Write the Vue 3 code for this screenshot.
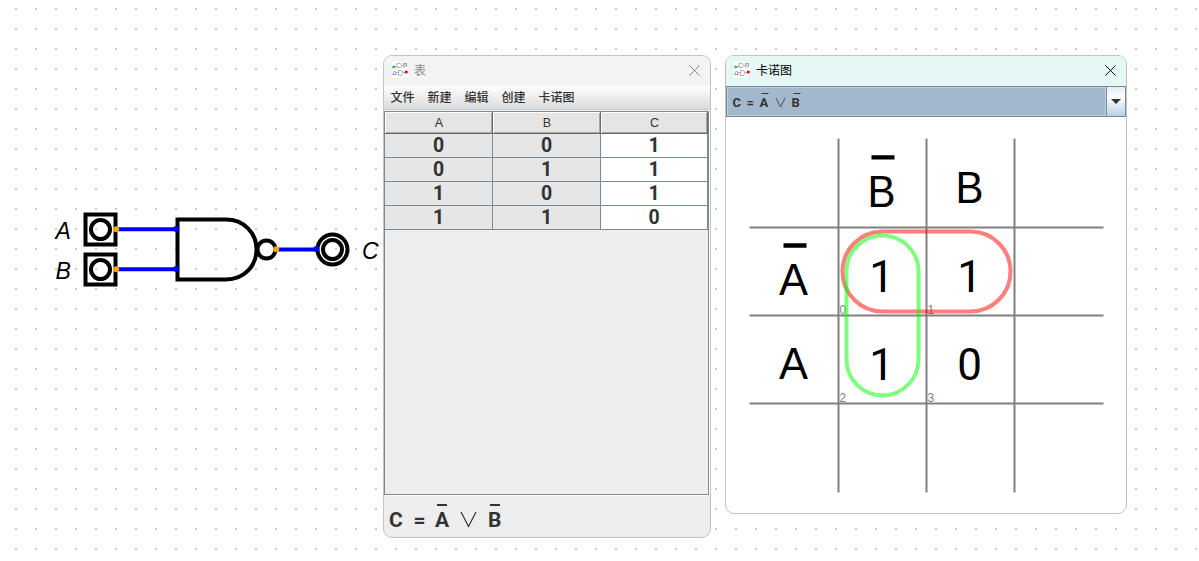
<script setup>
const rows = [[0, 0, 1], [0, 1, 1], [1, 0, 1], [1, 1, 0]]
const menus = ['文件', '新建', '编辑', '创建', '卡诺图']
const lines = [0, 1, 2]
</script>

<template>
  <main class="desk">
    <svg class="circuit" width="384" height="100" viewBox="0 200 384 100">
      <g fill="none" stroke="#000" stroke-width="4">
        <rect x="85.5" y="214.5" width="30" height="30" />
        <rect x="85.5" y="254.5" width="30" height="30" />
        <circle cx="100.5" cy="229.5" r="9.5" />
        <circle cx="100.5" cy="269.5" r="9.5" />
        <circle cx="266.5" cy="249.5" r="9" />
        <circle cx="332.5" cy="249.5" r="15" />
        <circle cx="332.5" cy="249.5" r="9.5" />
      </g>
      <path d="M116 229.3H177M116 269.3H177M276 249.5H317" stroke="#00f" stroke-width="4" />
      <path d="M177.500 219.500H226C244 219.500 256.500 233 256.500 249.500S244 279.500 226 279.500H177.500Z" fill="none" stroke="#000" stroke-width="4" />
      <g fill="#00f"><circle cx="176.300" cy="229" r="3" /><circle cx="176.300" cy="269" r="3" /><circle cx="316.300" cy="249" r="3" /></g>
      <g fill="#ffa500"><circle cx="116.200" cy="229.200" r="3" /><circle cx="116.200" cy="269.200" r="3" /><circle cx="276.200" cy="249.200" r="3" /></g>
      <g class="pin"><text x="55.500" y="239">A</text><text x="55.500" y="279">B</text><text x="362" y="259">C</text></g>
    </svg>

    <section class="window table-window">
      <header class="title">
        <svg class="logo" width="16" height="16" viewBox="0 0 16 16">
          <rect width="16" height="16" fill="#fff" />
          <g fill="none" stroke="#aaa" stroke-width=".9"><path d="M5 1.500H8.500Q10.500 3.500 8.500 5.500H5Z M6.500 8.500H9.500Q12.500 10.500 9.500 13.500H6.500Z M1.500 9.500H3.500V12.500H1.500Z M11.500 2H13V5H11.500Z" /></g>
          <path d="M2 4.500H5M10 3.500H11M4 10.500H6M11 10.500H14M11 1.500H15M14.500 1V5M0 12.500H5" fill="none" stroke="#8c8ad0" stroke-width=".8" />
          <circle cx="1.700" cy="5" r="1.500" fill="#2bc43a" /><circle cx="14.300" cy="10" r="1.600" fill="#f00018" />
        </svg>
        <span class="name">表</span>
        <svg class="close" width="11" height="11" viewBox="0 0 11 11"><path d="M.5.5L10.500 10.500M10.500.5L.5 10.500" stroke="currentColor" /></svg>
      </header>
      <nav class="menubar"><span v-for="m in menus" :key="m">{{ m }}</span></nav>
      <div class="scroll">
        <div class="grid">
          <div v-for="h in ['A', 'B', 'C']" :key="h" class="head">{{ h }}</div>
          <template v-for="(r, i) in rows" :key="i">
            <div v-for="(v, j) in r" :key="j" class="cell" :class="{ result: j === 2 }">{{ v }}</div>
          </template>
        </div>
      </div>
      <footer class="result-bar">
        <svg width="140" height="38" viewBox="0 0 140 38" class="formula">
          <text x="5" y="28">C</text><text x="29.500" y="28">=</text><text x="51" y="28">A</text><text x="104" y="28">B</text>
          <path d="M53 6H63M106 6H116" stroke="#333" stroke-width="2" />
          <path d="M77 13L84.500 27.500L92 13" fill="none" stroke="#333" stroke-width="1.200" />
        </svg>
      </footer>
    </section>

    <section class="window map-window">
      <header class="title">
        <svg class="logo" width="16" height="16" viewBox="0 0 16 16">
          <rect width="16" height="16" fill="#fff" />
          <g fill="none" stroke="#aaa" stroke-width=".9"><path d="M5 1.500H8.500Q10.500 3.500 8.500 5.500H5Z M6.500 8.500H9.500Q12.500 10.500 9.500 13.500H6.500Z M1.500 9.500H3.500V12.500H1.500Z M11.500 2H13V5H11.500Z" /></g>
          <path d="M2 4.500H5M10 3.500H11M4 10.500H6M11 10.500H14M11 1.500H15M14.500 1V5M0 12.500H5" fill="none" stroke="#8c8ad0" stroke-width=".8" />
          <circle cx="1.700" cy="5" r="1.500" fill="#2bc43a" /><circle cx="14.300" cy="10" r="1.600" fill="#f00018" />
        </svg>
        <span class="name">卡诺图</span>
        <svg class="close" width="11" height="11" viewBox="0 0 11 11"><path d="M.5.5L10.500 10.500M10.500.5L.5 10.500" stroke="currentColor" /></svg>
      </header>
      <div class="combo">
        <div class="choice">
          <svg width="90" height="27" viewBox="0 0 90 27" class="formula small">
            <text x="4.500" y="19">C</text><text x="18.500" y="19">=</text><text x="31.500" y="19">A</text><text x="63.500" y="19">B</text>
            <path d="M33.500 5.500H40.500M65.500 5.500H72.500" stroke="#333" />
            <path d="M48 10L52.500 19L57 10" fill="none" stroke="#444" stroke-width=".9" />
          </svg>
        </div>
        <div class="arrow"><svg width="10" height="5" viewBox="0 0 10 5"><path d="M0 0H10L5 5Z" fill="#333" /></svg></div>
      </div>
      <svg class="kmap" width="400" height="396" viewBox="726 117 400 396">
        <g stroke="#808080" stroke-width="2">
          <path v-for="i in lines" :key="i" :d="`M${838.500 + i * 88} 138.500V492.500M749.500 ${227.500 + i * 88}H1103.500`" />
        </g>
        <g class="index"><text x="839.500" y="314">0</text><text x="927.500" y="314">1</text><text x="839.500" y="402">2</text><text x="927.500" y="402">3</text></g>
        <g class="big">
          <text x="867.500" y="207" textLength="28" lengthAdjust="spacingAndGlyphs">B</text>
          <text x="955.500" y="203" textLength="28" lengthAdjust="spacingAndGlyphs">B</text>
          <text x="779" y="295" textLength="29" lengthAdjust="spacingAndGlyphs">A</text>
          <text x="779" y="379" textLength="29" lengthAdjust="spacingAndGlyphs">A</text>
        </g>
        <g class="digit">
          <text x="881.500" y="292">1</text><text x="969.500" y="292">1</text><text x="881.500" y="380">1</text><text x="969.500" y="380">0</text>
        </g>
        <path d="M871.500 157.300H894.500M783.500 245.500H806.500" stroke="#000" stroke-width="4.300" />
        <g fill="none" stroke-width="4" stroke-opacity=".5">
          <rect x="842.500" y="231.500" width="168" height="80" rx="40" stroke="#f00" />
          <rect x="846.500" y="235.500" width="72" height="160" rx="36" stroke="#0f0" />
        </g>
      </svg>
    </section>
  </main>
</template>

<style>
body { margin: 0; overflow: hidden; }
</style>

<style scoped>
.desk {
  position: relative;
  width: 1199px;
  height: 561px;
  background-color: #fff;
  background-image: conic-gradient(from 270deg at 2px 2px, #ccc 25%, transparent 0);
  background-size: 20px 20px;
  background-position: 15px 8px;
  font-family: "Liberation Sans", "Noto Sans CJK SC", sans-serif;
}
.circuit { position: absolute; left: 0; top: 200px; }
.pin { font: italic 23px "Liberation Sans", sans-serif; }
.window {
  position: absolute;
  top: 55px;
  box-sizing: border-box;
  border: 1px solid #c3c3c3;
  border-radius: 9px;
  overflow: hidden;
  display: flex;
  flex-direction: column;
}
.table-window { left: 383px; width: 328px; height: 483px; background: #eee; }
.map-window { left: 725px; width: 402px; height: 459px; background: #fff; }
.title {
  height: 30px;
  flex: none;
  box-sizing: border-box;
  padding: 0 10px 2px 8px;
  display: flex;
  align-items: center;
  font: 12px "Noto Sans CJK SC", sans-serif;
}
.table-window .title { background: #f3f3f3; color: #888; }
.map-window .title { background: #e5f8f6; color: #000; }
.logo { margin-right: 6px; }
.name { flex: 1; line-height: 28px; }
.menubar {
  height: 24px;
  flex: none;
  display: flex;
  gap: 13px;
  padding-left: 6.5px;
  background: linear-gradient(#fff, #dadada);
  border-bottom: 1px solid #ccc;
  box-sizing: border-box;
  font: 500 12px/21px "Noto Sans CJK SC", sans-serif;
  color: #333;
}
.scroll {
  height: 385px;
  width: 325px;
  box-sizing: border-box;
  border: 1px solid #7a8a99;
  box-shadow: 1px 1px #fff;
  margin-top: 1px;
}
.grid { display: grid; grid-template-columns: 108px 108px 107px; grid-template-rows: 22px repeat(4, 24px); }
.head {
  box-sizing: border-box;
  background: #e5e5e5;
  border: solid #6a6a6a;
  border-width: 0 1px 1px 0;
  box-shadow: inset 1px 1px #fff, inset -1px -1px #a5a5a5;
  text-align: center;
  padding-left: 1px;
  font-size: 12.5px;
  line-height: 22px;
  color: #333;
}
.cell {
  box-sizing: border-box;
  border: solid #7a8a99;
  border-width: 0 1px 1px 0;
  background: #e6e6e6;
  text-align: center;
  font: bold 19.5px/23px Roboto, sans-serif;
  color: #333;
}
.cell.result { background: #fff; }
.result-bar { height: 42px; }
.formula { display: block; font: bold 21px Roboto, sans-serif; fill: #333; margin-top: 4px; }
.small { font: bold 13px Roboto, sans-serif; margin: 0; }
.combo { display: flex; height: 31px; flex: none; box-sizing: border-box; border: 1px solid #7a8a99; }
.choice { flex: 1; border: 1px solid #b8cfe5; background: #a3b8cc; }
.arrow {
  width: 18px;
  border-left: 1px solid #7a8a99;
  background: linear-gradient(#e2ebf4, #fff 35%, #b8cfe5);
  display: flex;
  align-items: center;
  justify-content: center;
}
.kmap { display: block; }
.index { font: 12px "Liberation Sans", sans-serif; fill: #808080; }
.big { font: 44px "Liberation Sans", sans-serif; }
.digit { font: 44px Roboto, sans-serif; text-anchor: middle; }
</style>
